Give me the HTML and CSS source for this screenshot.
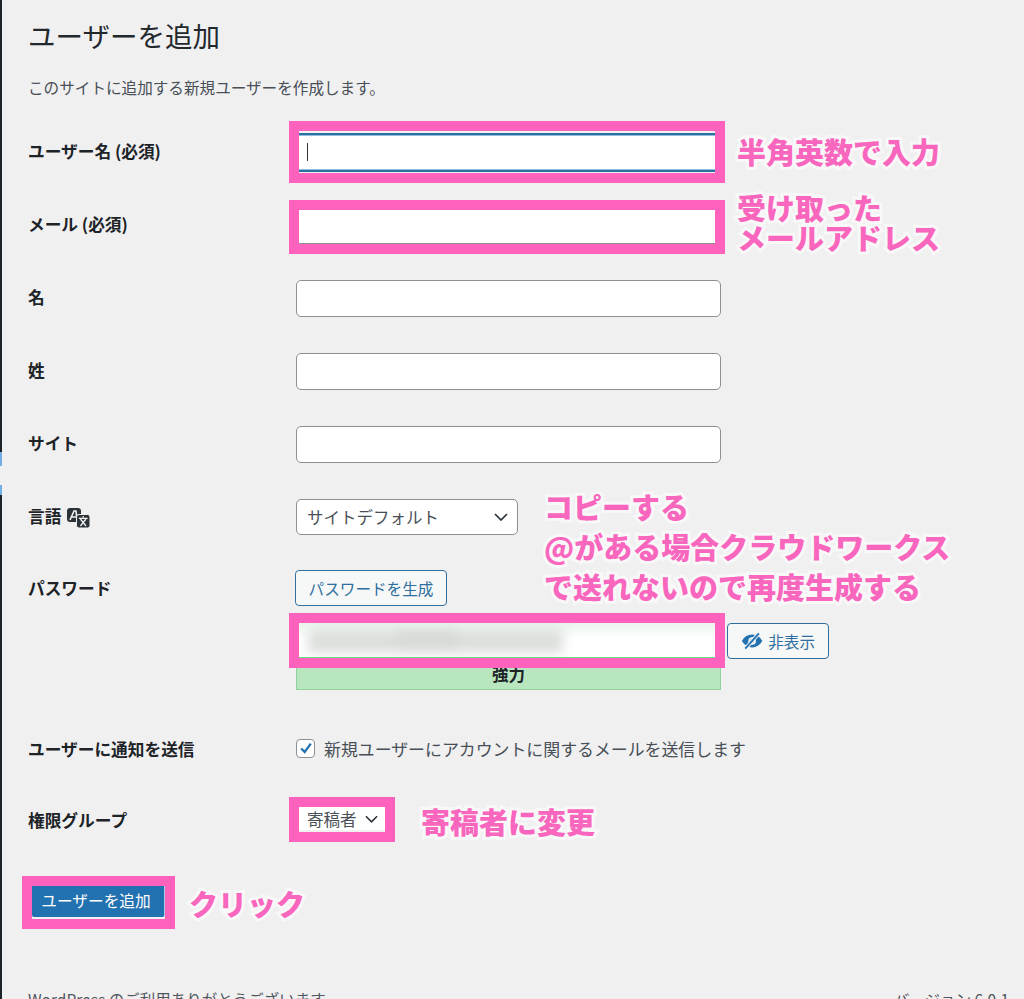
FILE: index.html
```html
<!DOCTYPE html>
<html lang="ja">
<head>
<meta charset="utf-8">
<title>ユーザーを追加</title>
<link rel="stylesheet" href="styles.css">
</head>
<body>
<div class="page">
  <aside class="rail">
    <div class="rail-dark rail-top"></div>
    <div class="rail-blue rail-b1"></div>
    <div class="rail-gap"></div>
    <div class="rail-blue rail-b2"></div>
    <div class="rail-dark rail-bottom"></div>
  </aside>
  <main class="main">
    <h1 class="title">ユーザーを追加</h1>
    <p class="intro">このサイトに追加する新規ユーザーを作成します。</p>
    <form class="form">
      <div class="row">
        <label class="label">ユーザー名 (必須)</label>
        <div class="field"><input class="input input-focus" type="text"><span class="caret"></span></div>
      </div>
      <div class="row">
        <label class="label">メール (必須)</label>
        <div class="field"><input class="input" type="text"></div>
      </div>
      <div class="row">
        <label class="label">名</label>
        <div class="field"><input class="input" type="text"></div>
      </div>
      <div class="row">
        <label class="label">姓</label>
        <div class="field"><input class="input" type="text"></div>
      </div>
      <div class="row">
        <label class="label">サイト</label>
        <div class="field"><input class="input" type="text"></div>
      </div>
      <div class="row">
        <label class="label">言語
          <svg class="lang-icon" viewBox="0 0 23 20" width="23" height="20"><rect x="0" y="0" width="14" height="14" rx="3" fill="#2c3338"/><path d="M3 12 7 3h2l1 9M5 9h4.500" fill="none" stroke="#f0f0f1" stroke-width="1.600"/><rect x="9.500" y="6.500" width="13.500" height="13.500" rx="2.500" fill="#2c3338" stroke="#f0f0f1" stroke-width="1"/><path d="M16.200 8v1.600M11.800 10.400h8.800M13.400 18 19 11M19 18 13.400 11" fill="none" stroke="#f0f0f1" stroke-width="1.300"/></svg>
        </label>
        <div class="field">
          <div class="select select-lang">サイトデフォルト<svg class="chev" viewBox="0 0 14 8" width="14" height="8"><path d="M1 1l6 6 6-6" fill="none" stroke="#2c3338" stroke-width="1.700"/></svg></div>
        </div>
      </div>
      <div class="row row-pass">
        <label class="label">パスワード</label>
        <div class="field">
          <button class="btn-outline btn-gen" type="button">パスワードを生成</button>
          <div class="pass-line">
            <div class="pass-box"><span class="pass-blur"></span><span class="pass-blur pass-blur-b"></span></div>
            <button class="btn-outline btn-hide" type="button">
              <svg viewBox="0 0 26 20" width="24" height="18"><path d="M1 10c3-5 7-7.500 12-7.500S22 5 25 10c-3 5-7 7.500-12 7.500S4 15 1 10z" fill="#2271b1"/><circle cx="13" cy="10" r="4.500" fill="#f6f7f7"/><circle cx="13" cy="10" r="2.500" fill="#2271b1"/><path d="M5 19 21 1" stroke="#f6f7f7" stroke-width="4.500"/><path d="M5 19 21 1" stroke="#2271b1" stroke-width="2.200"/></svg>
              非表示
            </button>
          </div>
          <div class="strength">強力</div>
        </div>
      </div>
      <div class="row row-notify">
        <label class="label">ユーザーに通知を送信</label>
        <div class="field check-line">
          <span class="check"><svg viewBox="0 0 16 16" width="14" height="14"><path d="M2.500 8.500 6.500 12.500 13.500 3" fill="none" stroke="#2271b1" stroke-width="2.600"/></svg></span>
          <span>新規ユーザーにアカウントに関するメールを送信します</span>
        </div>
      </div>
      <div class="row row-role">
        <label class="label">権限グループ</label>
        <div class="field">
          <div class="select select-role">寄稿者<svg class="chev" viewBox="0 0 14 8" width="13" height="8"><path d="M1 1l6 6 6-6" fill="none" stroke="#2c3338" stroke-width="1.700"/></svg></div>
        </div>
      </div>
      <button class="btn-primary" type="button">ユーザーを追加</button>
    </form>
    <footer class="foot">
      <span>WordPress のご利用ありがとうございます。</span>
      <span>バージョン 6.0.1</span>
    </footer>
  </main>
</div>

<div class="frame frame-user"></div>
<div class="frame frame-mail"></div>
<div class="frame frame-pass"></div>
<div class="frame frame-role"></div>
<div class="frame frame-submit"></div>

<div class="note note-user">半角英数で入力</div>
<div class="note note-mail">受け取った<br>メールアドレス</div>
<div class="note note-copy">コピーする<br>@がある場合クラウドワークス<br>で送れないので再度生成する</div>
<div class="note note-role">寄稿者に変更</div>
<div class="note note-click">クリック</div>
</body>
</html>
```
FILE: styles.css
```css
* { box-sizing: border-box; }
html, body { margin: 0; height: 999px; overflow: hidden; }
body {
  position: relative;
  background: #f0f0f1;
  color: #2c3338;
  font-family: "Noto Sans CJK JP", "Noto Sans", sans-serif;
  font-size: 16px;
}
.page { display: flex; height: 999px; overflow: hidden; }
.rail { width: 2px; flex: none; display: flex; flex-direction: column; }
.rail-dark { background: #1d2327; }
.rail-blue { background: #72aee6; }
.rail-top { height: 452px; }
.rail-b1 { height: 14px; }
.rail-gap { height: 19px; }
.rail-b2 { height: 10px; }
.rail-bottom { flex: 1; }
.main { flex: 1; padding: 16px 0 0 26px; min-width: 0; }
.title { margin: 0; font-size: 27.500px; line-height: 38px; font-weight: 400; color: #23282d; }
.intro { margin: 23px 0 0; font-size: 15.600px; line-height: 20px; color: #484f56; }
.form { margin-top: 37px; }
.row { display: flex; align-items: flex-start; margin-bottom: 36px; }
.label {
  width: 268px; flex: none; line-height: 35px; font-size: 16.700px; font-weight: 700; color: #1d2327;
  display: flex; align-items: center; gap: 6px;
}
.field { width: 425px; position: relative; }
.input {
  display: block; width: 425px; height: 37px; padding: 0 10px;
  background: #fff; border: 1px solid #8c8f94; border-radius: 5px; outline: 0;
}
.input-focus { height: 39px; margin: -1px 0 -1px; border: 2px solid #2f6f9f; box-shadow: inset 0 0 0 1px #8fbfdc; border-radius: 0; }
.caret { position: absolute; left: 11px; top: 9px; width: 1px; height: 18px; background: #2c3338; }
.lang-icon { flex: none; margin-top: 3px; }
.select {
  display: inline-flex; align-items: center; justify-content: space-between;
  height: 36px; background: #fff; border: 1px solid #8c8f94; border-radius: 5px;
  color: #484f56; line-height: 34px; font-size: 16.500px;
}
.select-lang { width: 222px; padding: 0 9px 0 10px; }
.select-role { width: 87px; height: 26px; line-height: 24px; padding: 3px 8px 0; margin: 0 0 0 3px; border: 0; border-radius: 0; }
.row-pass { margin-bottom: 45px; }
.btn-outline {
  display: inline-flex; align-items: center; gap: 5px; height: 36px; padding: 0 12px;
  background: #f6f7f7; border: 1px solid #2f6f9f; border-radius: 4px;
  color: #2f6f9f; font: inherit; font-size: 15.600px;
}
.btn-gen { display: flex; margin: -1px 0 0 -1px; width: 152px; justify-content: center; padding: 0; }
.pass-line { position: relative; margin-top: 16px; height: 36px; }
.pass-box { width: 425px; height: 36px; background: linear-gradient(#eaf5ec, #fff 45%); border: 1px solid #68de7c; overflow: hidden; position: relative; }
.pass-blur { position: absolute; left: 11px; top: 6px; width: 255px; height: 24px; background: #dcdfdc; filter: blur(6px); }
.pass-blur-b { left: 100px; top: 9px; width: 60px; height: 12px; background: #d6d9d6; }
.btn-hide { position: absolute; left: 431px; top: 1px; width: 102px; padding: 0 13px; white-space: nowrap; }
.strength {
  width: 425px; height: 31px; margin-top: 1px; background: #b8e6bf; border: 1px solid #8fd19a; text-align: center;
  font-size: 16.500px; font-weight: 700; line-height: 29px; color: #1d2327;
}
.row-notify { margin-bottom: 43px; }
.row-notify .label { padding-top: 2px; line-height: 24px; }
.row-role .label { padding-top: 4px; line-height: 24px; }
.check-line { display: flex; align-items: center; gap: 9px; width: 480px; height: 26px; white-space: nowrap; color: #484f56; font-size: 16.900px; }
.check { width: 19px; height: 19px; flex: none; background: #fff; border: 1px solid #8c8f94; border-radius: 4px; display: flex; align-items: center; justify-content: center; }
.row-role { margin-bottom: 52px; }
.btn-primary {
  display: block; margin-left: 4px; width: 133px; height: 33px; padding: 0 4px 0 0;
  background: #2271b1; border: 0; border-right: 1px solid #a9c9e0; border-radius: 2px; color: #fff;
  font: inherit; font-size: 15.700px;
}
.foot { margin-top: 72px; width: 981px; display: flex; justify-content: space-between; font-size: 15.500px; line-height: 20px; color: #50575e; }

.frame { position: absolute; border: 10px solid #ff62bd; pointer-events: none; }
.frame-user { left: 289px; top: 121px; width: 436px; height: 62px; }
.frame-mail { left: 289px; top: 200px; width: 436px; height: 54px; }
.frame-pass { left: 289px; top: 613px; width: 436px; height: 55px; }
.frame-role { left: 289px; top: 797px; width: 106px; height: 45px; }
.frame-submit { left: 22px; top: 876px; width: 153px; height: 53px; }

.note {
  position: absolute; white-space: nowrap; color: #f966bd;
  font-size: 29px; font-weight: 900; line-height: 30px;
  -webkit-text-stroke: 6px #f8f8f9; paint-order: stroke fill;
}
.note-user { left: 737px; top: 136px; }
.note-mail { left: 737px; top: 192px; }
.note-copy { left: 544px; top: 486px; line-height: 40px; }
.note-role { left: 421px; top: 806px; }
.note-click { left: 189px; top: 888px; }
```
